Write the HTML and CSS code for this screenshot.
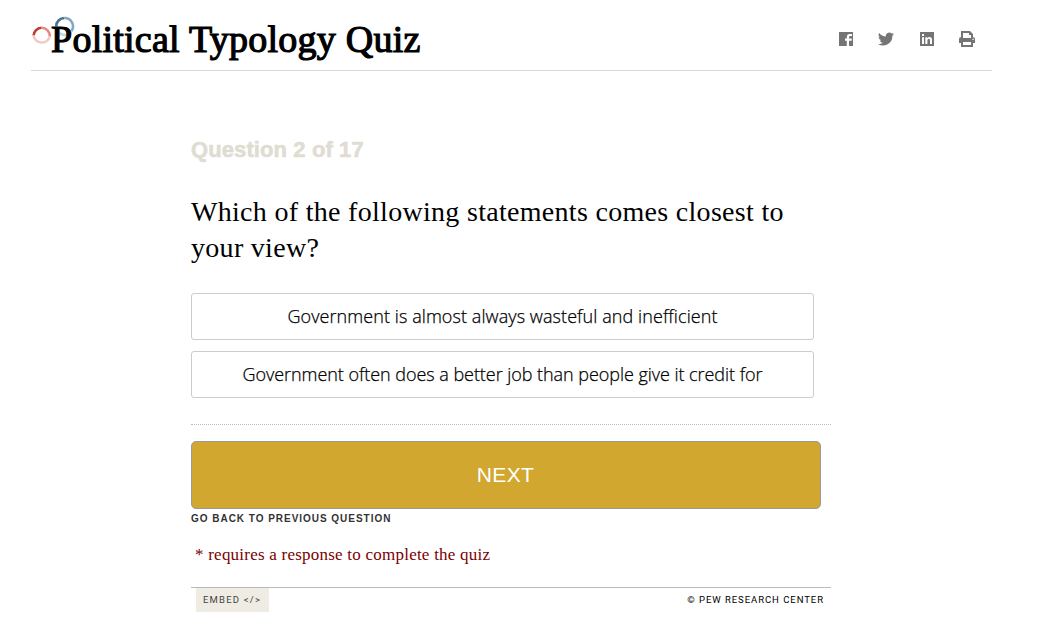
FILE: index.html
```html
<!DOCTYPE html>
<html lang="en">
<head>
<meta charset="utf-8">
<title>Political Typology Quiz</title>
<link rel="stylesheet" href="styles.css">
</head>
<body>
<header class="header">
  <div class="brand">
    <svg class="rings" width="46" height="30" viewBox="0 0 46 30" fill="none" stroke-width="2.600">
      <path d="M2.600 20.500A8.300 8.300 0 0 1 10.500 12.700" stroke="#bd3b2f"/>
      <path d="M10.500 12.700A8.300 8.300 0 0 1 18.800 21.500" stroke="#e38a80"/>
      <path d="M18.800 21.500A8.300 8.300 0 0 1 2.600 20.500" stroke="#f4c8c2"/>
      <path d="M25.200 11.500A8.300 8.300 0 0 1 33.500 3" stroke="#4b718c"/>
      <path d="M33.500 3A8.300 8.300 0 0 1 40.500 16" stroke="#83a7c0"/>
      <path d="M40.500 16A8.300 8.300 0 0 1 25.200 11.500" stroke="#c3d6e3"/>
    </svg>
    <h1 class="title">Political Typology Quiz</h1>
  </div>
  <nav class="share">
    <svg width="16" height="16" viewBox="0 0 16 16"><path fill="#757575" d="M1 1h14v14H1z"/><path fill="#fff" d="M8.800 15V9.800H7V7.600h1.800V6q0-3 3-3H14v2h-1.500Q11 5 11 6.300v1.300h2.700v2.200H11V15z"/></svg>
    <svg width="16" height="16" viewBox="0 0 24 24"><path fill="#757575" d="M24 4.600a10 10 0 0 1-2.800.8 5 5 0 0 0 2.200-2.700 10 10 0 0 1-3.100 1.200 4.900 4.900 0 0 0-8.400 4.500A14 14 0 0 1 1.700 3.100a4.900 4.900 0 0 0 1.500 6.600 5 5 0 0 1-2.200-.6 4.900 4.900 0 0 0 3.900 4.900 5 5 0 0 1-2.200.1 4.900 4.900 0 0 0 4.600 3.400A9.900 9.900 0 0 1 0 19.500 14 14 0 0 0 21.500 7.100 10 10 0 0 0 24 4.600z"/></svg>
    <svg width="16" height="16" viewBox="0 0 16 16"><path fill="#757575" d="M1 1h14v14H1z"/><path fill="#fff" d="M3 3h2v2H3zM3 6.300h2V13H3zM6.300 6.300h2v1q.7-1.200 2.300-1.200 2.400 0 2.400 2.900v4h-2V9.400Q11 7.800 9.900 7.800q-1.500 0-1.500 1.800V13H6.300z"/></svg>
    <svg class="print" width="18" height="18" viewBox="0 0 18 18"><path fill="#757575" d="M3 1h9l3 3v4H3zM1 9q0-2 2-2h12q2 0 2 2v4H1zM3 11h12v6H3z"/><path fill="#fff" d="M5 3h6v2h2v3H5zM5 12h8v3H5zM14.500 8.800h1.200V10h-1.200z"/></svg>
  </nav>
</header>
<main class="quiz">
  <h2 class="progress">Question 2 of 17</h2>
  <p class="question">Which of the following statements comes closest to<br>your view?</p>
  <div class="options">
    <div class="option option-a">Government is almost always wasteful and inefficient</div>
    <div class="option option-b">Government often does a better job than people give it credit for</div>
  </div>
  <div class="actions">
    <button class="next">NEXT</button>
    <div class="back">GO BACK TO PREVIOUS QUESTION</div>
    <p class="required">* requires a response to complete the quiz</p>
  </div>
  <footer class="footer">
    <span class="embed">EMBED &lt;/&gt;</span>
    <span class="credit">© PEW RESEARCH CENTER</span>
  </footer>
</main>
</body>
</html>
```
FILE: styles.css
```css
* { box-sizing: border-box; }
body { margin: 0; background: #fff; color: #000; font-family: "Liberation Sans", Arial, sans-serif; overflow: hidden; }
.header { display: flex; justify-content: space-between; width: 961px; height: 71px; margin-left: 31px; border-bottom: 1px solid #dadada; }
.brand { position: relative; padding: 15px 0 0 20px; }
.rings { position: absolute; left: 0; top: 15px; }
.title { position: relative; margin: 0; font: 400 38px/48px "Liberation Serif", Georgia, serif; letter-spacing: 0.25px; white-space: nowrap; -webkit-text-stroke: 1.2px #000; }
.share { display: flex; align-items: flex-start; gap: 24.500px; padding: 31px 17px 0 0; }
.share svg { display: block; }
.print { margin: -1px -1px 0; }
.quiz { width: 640px; margin-left: 191px; padding-top: 65px; }
.progress { margin: 0; font-size: 22px; line-height: 28px; letter-spacing: 0.1px; color: #dfddd2; -webkit-text-stroke: 0.6px #dfddd2; }
.question { margin: 30px 0 0; font: 28px/36px "Liberation Serif", Georgia, serif; letter-spacing: 0.3px; white-space: nowrap; }
.options { display: grid; gap: 11px; width: 623px; margin-top: 27px; }
.option { height: 47px; border: 1px solid #ccc; border-radius: 3px; text-align: center; font-family: "Open Sans", "Liberation Sans", sans-serif; font-size: 18px; font-weight: 300; line-height: 44px; white-space: nowrap; -webkit-text-stroke: 0.25px #000; font-variant-ligatures: none; }
.option-a { letter-spacing: 0.08px; }
.option-b { letter-spacing: -0.05px; }
.actions { margin-top: 26px; border-top: 1px dotted #bbb; padding-top: 16px; }
.next { display: block; width: 630px; height: 68px; padding: 0 1px 0 0; border: 1px solid #999; border-radius: 5px; background: #d1a730; color: #fff; font: 21px/66px "Liberation Sans", Arial, sans-serif; letter-spacing: 0.4px; }
.back { margin-top: 3px; font-size: 10px; font-weight: 700; line-height: 14px; letter-spacing: 0.97px; color: #333; }
.required { margin: 17px 0 0 4px; font: 17px/24px "Liberation Serif", Georgia, serif; letter-spacing: 0.23px; color: #7b0000; white-space: nowrap; }
.footer { display: flex; justify-content: space-between; margin-top: 20px; padding: 0 7px 0 5px; border-top: 1px solid #bbb; font-family: Roboto, "Liberation Sans", sans-serif; font-size: 9.500px; line-height: 24px; letter-spacing: 0.95px; }
.embed { width: 73px; height: 24px; padding-left: 7px; background: #efece3; color: #444; letter-spacing: 1.2px; }
```
